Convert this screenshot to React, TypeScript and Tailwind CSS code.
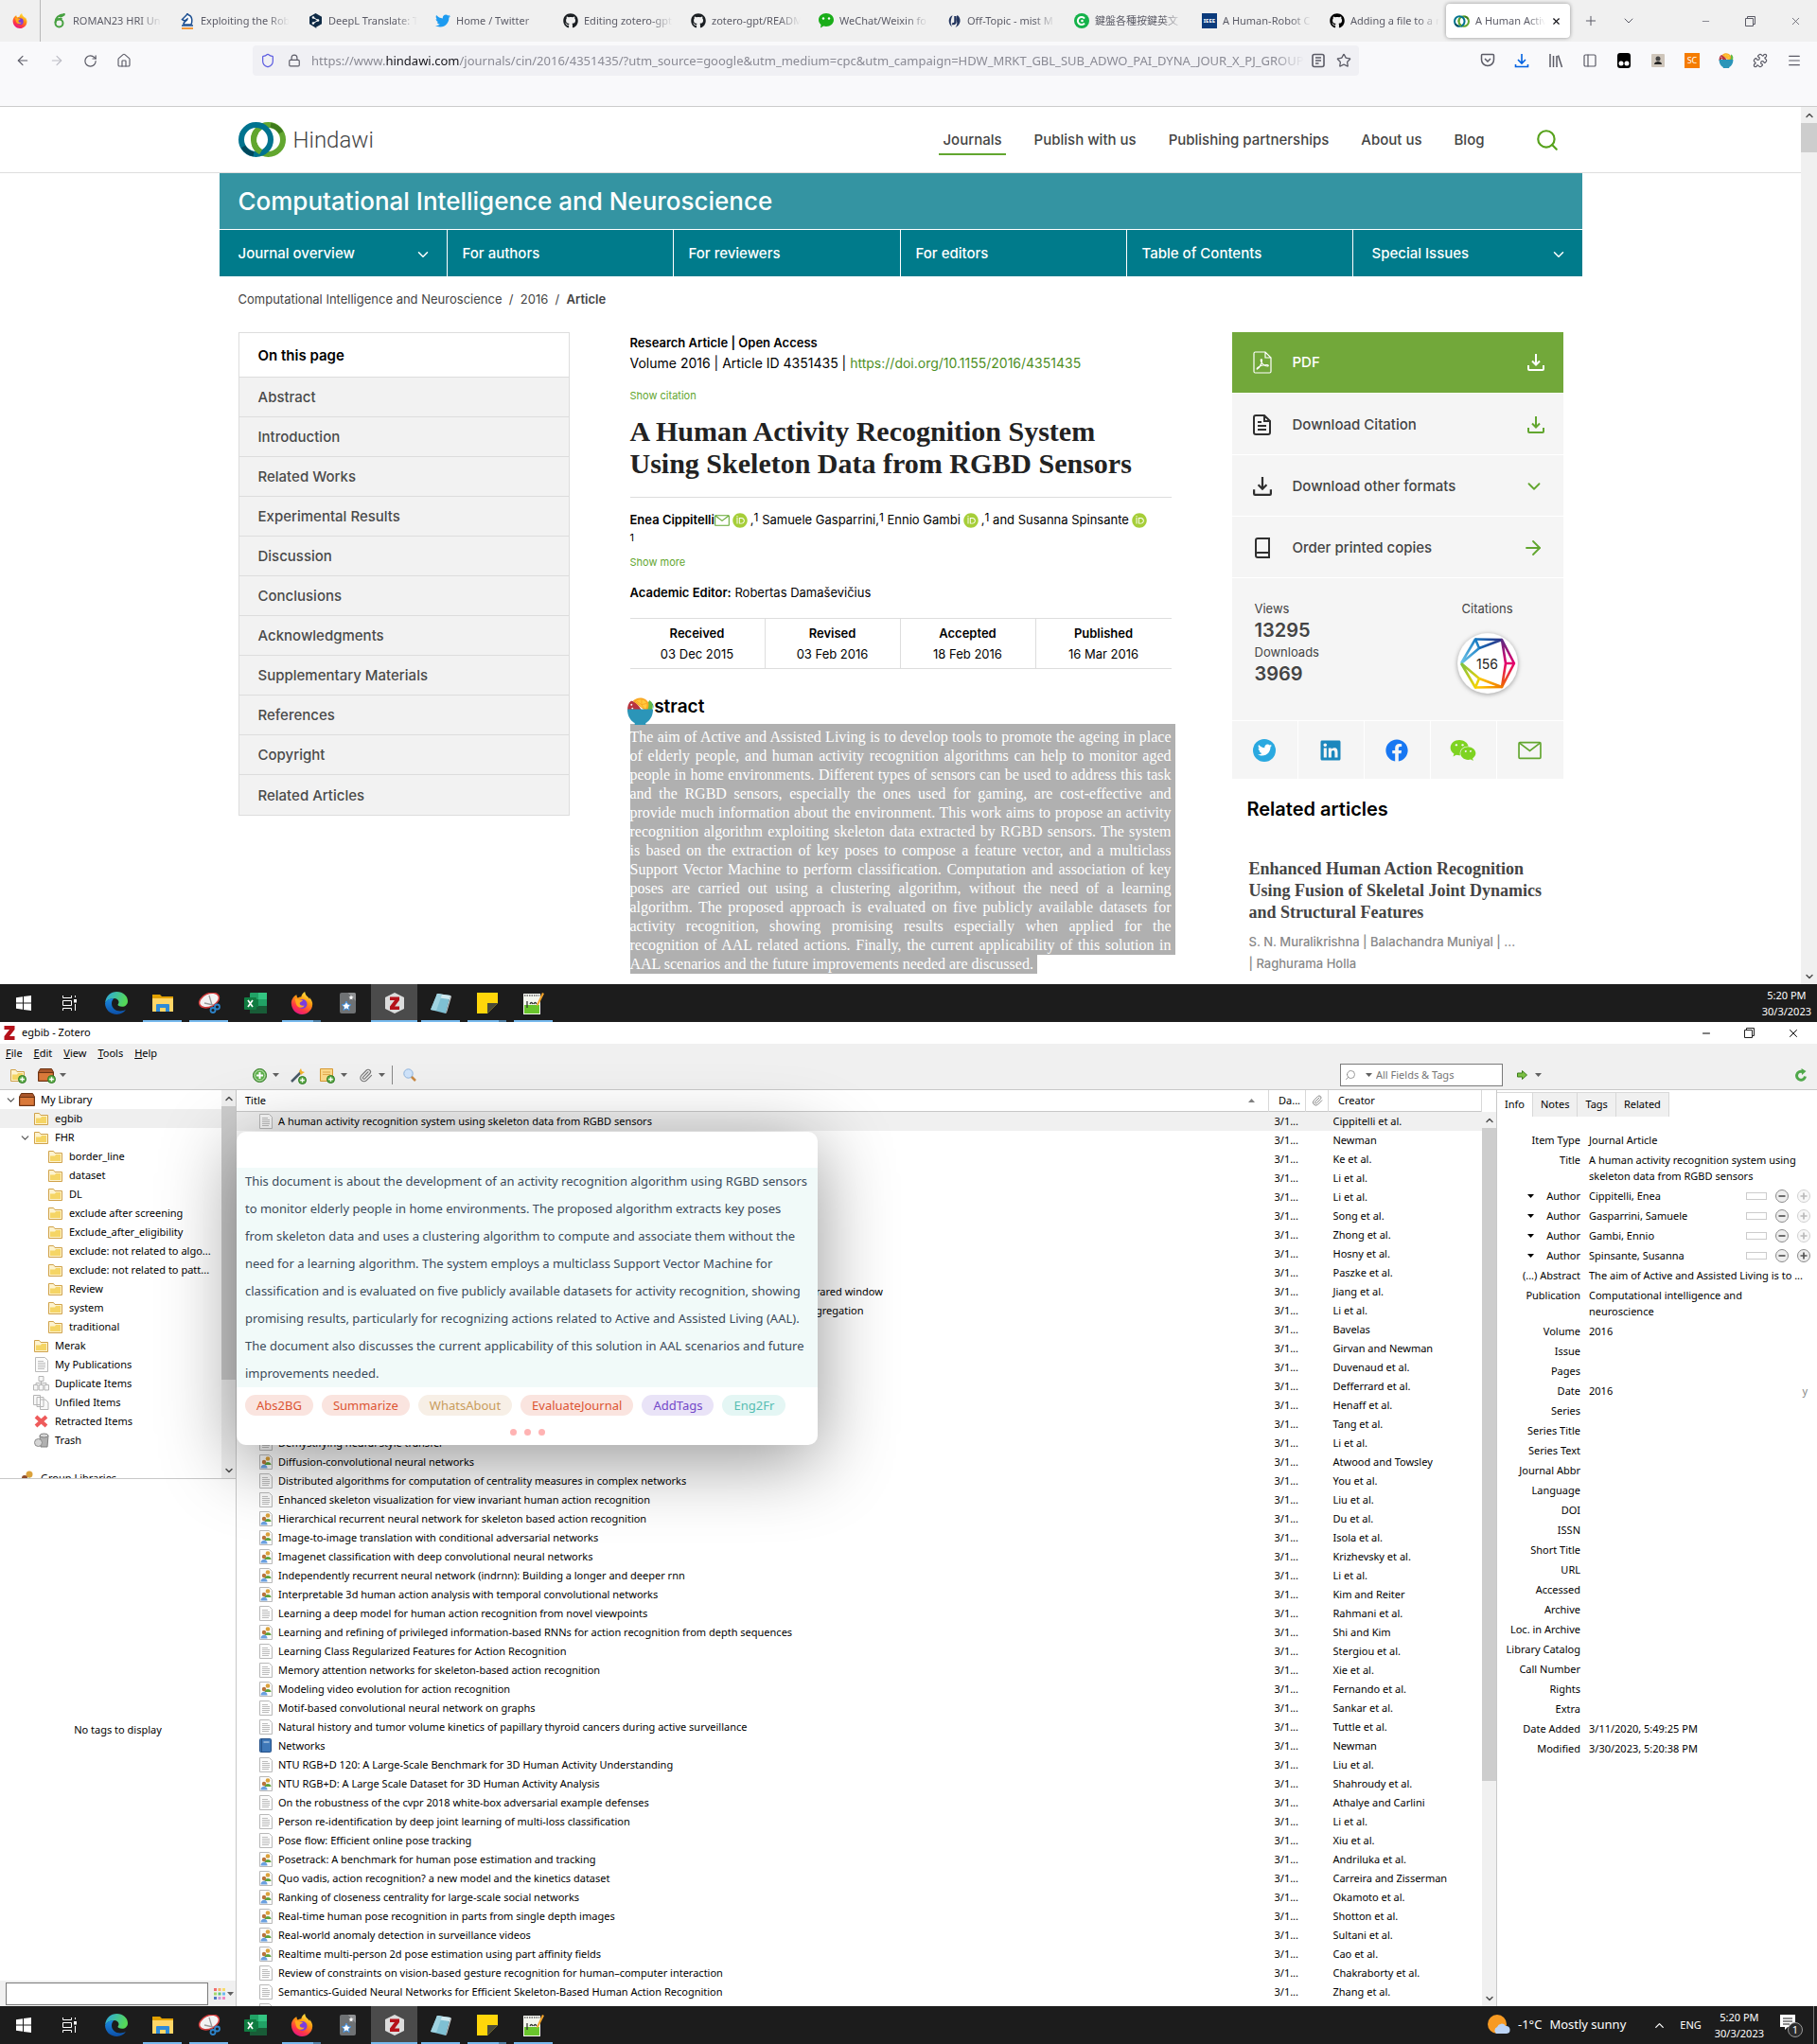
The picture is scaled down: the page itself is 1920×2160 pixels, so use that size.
import type { ReactNode } from "react";
import { FaGithub, FaTwitter, FaWeixin, FaFacebook, FaLinkedin, FaOrcid } from "react-icons/fa";
import {
  ArrowLeft,
  ArrowRight,
  RotateCw,
  House,
  Shield,
  Lock,
  Star,
  ChevronDown,
  ChevronUp,
  Plus,
  X,
  Minus,
  Menu,
  Puzzle,
  PanelLeft,
  Search,
  Paperclip,
} from "lucide-react";

/* ---------- drawings ---------- */

const Firefox = ({ s = 16 }: { s?: number }) => (
  <svg width={s} height={s} viewBox="0 0 24 24" aria-hidden="true">
    <defs>
      <linearGradient id="ff" x1="0.8" y1="0" x2="0.3" y2="1">
        <stop offset="0" stopColor="#fff44f" />
        <stop offset="0.4" stopColor="#ff980e" />
        <stop offset="0.75" stopColor="#ff3647" />
        <stop offset="1" stopColor="#e31587" />
      </linearGradient>
    </defs>
    <path d="M22.5 10c-.6-1.6-1.6-3-2.6-3.9.3.8.5 1.4.5 2C19.3 5.600 15.500 4.500 15.200 0c-3 1.700-3.700 4.500-3.900 5.500-1.600 0-2.800.6-3.500 1.100-.9-.7-1.300-2-1.400-3.400C4.300 4.300 3.200 5.500 2.600 6.600 1 9 .8 11 .9 12.800 1.200 19 6 24 12 24s11.200-4.700 11.200-11c0-1.100-.2-2-.7-3z" fill="url(#ff)" />
    <circle cx="12.500" cy="13" r="5" fill="#7a3ce0" />
    <path d="M4.500 7.500c2-.7 4 .1 4.900 1 1.500-.2 2.800.2 3.600.8-.5 1.400-3 1.300-3.300 2.700-.4 2.300 3 3.500 5 2.200-1 3.400-6.800 3.600-8.600-.8-.8-2-.8-4-1.600-5.900z" fill="#ffa91b" />
  </svg>
);

const HindawiRings = ({ w = 50, h = 37 }: { w?: number; h?: number }) => (
  <svg width={w} height={h} viewBox="0 0 50 37" aria-hidden="true">
    <circle cx="31.500" cy="18.500" r="15.500" fill="none" stroke="#62a62f" strokeWidth="6" />
    <circle cx="18.500" cy="18.500" r="15.500" fill="none" stroke="#00738f" strokeWidth="6" />
    <path d="M5 26a15.500 15.500 0 0 0 11 7.800" fill="none" stroke="#00485c" strokeWidth="5" />
    <path d="M16.600 22.500a15.500 15.500 0 0 0 7 9.300" fill="none" stroke="#62a62f" strokeWidth="6" />
    <path d="M16.100 20a15.500 15.500 0 0 1 2.500-10" fill="none" stroke="#62a62f" strokeWidth="6" />
    <path d="M34 3.200a15.500 15.500 0 0 1 11 8" fill="none" stroke="#3f7a1c" strokeWidth="5" />
  </svg>
);

const Salad = ({ s = 16 }: { s?: number }) => (
  <svg width={s} height={s} viewBox="0 0 28 30" aria-hidden="true">
    <path d="M24 3c4 2 5 8 2 12h-8z" fill="#63b946" />
    <path d="M4 4c3-1 9 5 12 11H0C0 10 1 6 4 4z" fill="#b8343f" />
    <circle cx="4.500" cy="8" r="1" fill="#fff" />
    <circle cx="5.500" cy="12" r="1" fill="#fff" />
    <path d="M6 4C10-1 20-1 23 6c1 4-1 8-3 9z" fill="#f9a825" />
    <path d="M9 4.500c3-3 10-3 12 2 1 3-1 6-2 7z" fill="#ffc93c" />
    <path d="M15.500 8 10 4M15.500 8V2M15.500 8l6-1.500M15.500 8l4 6" stroke="#f9a825" strokeWidth="1" />
    <path d="M0 13h28c0 8-4 13-8 15v2H8v-2C4 26 0 21 0 13z" fill="#2b95b8" />
  </svg>
);

const DeepL = () => (
  <svg width="15" height="16" viewBox="0 0 15 16" aria-hidden="true">
    <path d="M7.500 0 14 3.700v7.600L8 14.800 8.500 16 1 11.300V3.700z" fill="#0f2b46" />
    <path d="M5 4.500 10 7.500 5 10.500" stroke="#fff" fill="none" />
    <circle cx="5" cy="4.500" r="1.300" fill="#fff" />
    <circle cx="10" cy="7.500" r="1.300" fill="#fff" />
    <circle cx="5" cy="10.500" r="1.300" fill="#fff" />
  </svg>
);

const Overleaf = () => (
  <svg width="14" height="16" viewBox="0 0 14 16" aria-hidden="true">
    <circle cx="6.500" cy="10.500" r="4" fill="none" stroke="#47a141" strokeWidth="2" />
    <path d="M2.500 10C2.500 5 6 1.500 12.500 1 10 2 11 3 7.500 3.500M5 6.500c2-1 3.500-1 4.500-.5" fill="none" stroke="#47a141" strokeWidth="2" />
  </svg>
);

const Knight = () => (
  <svg width="14" height="17" viewBox="0 0 14 17" aria-hidden="true">
    <path d="M3 12c0-4 4-3.500 4-6L4 8 1.500 6.500 6 2l1-1.500L8.500 2C12 3 12.500 8 11 12z" fill="#fff" stroke="#1d4f91" strokeWidth="1.500" />
    <path d="M1 13h12" stroke="#1d4f91" strokeWidth="1.500" />
    <path d="M1 16h12" stroke="#f57c00" strokeWidth="1.500" />
  </svg>
);

const WeChatFav = () => (
  <svg width="16" height="16" viewBox="0 0 16 16" aria-hidden="true">
    <path d="M8 0c4.500 0 8 3 8 7s-3.500 7-8 7c-1 0-2-.1-2.800-.4L2 15.500 2.500 12C1 10.700 0 9 0 7c0-4 3.500-7 8-7z" fill="#1aad19" />
    <circle cx="5" cy="5.500" r="1.200" fill="#fff" />
    <circle cx="11" cy="5.500" r="1.200" fill="#fff" />
  </svg>
);

const Mist = () => (
  <svg width="15" height="15" viewBox="0 0 16 16" aria-hidden="true">
    <path d="M6 1.200C1 3 0 10 5.500 14.500 3 10 4 5 6 1.200zM11 1c5 2.500 5 11-2 14 3-4 2-6 1-9z" fill="#24365f" />
    <path d="M9 2v7.500a2.500 2.500 0 0 1-3.500 1" fill="none" stroke="#24365f" strokeWidth="2.500" />
  </svg>
);

const GreenC = () => (
  <svg width="16" height="16" viewBox="0 0 16 16" aria-hidden="true">
    <circle cx="8" cy="8" r="8" fill="#15b24a" />
    <path d="M11 5.500A4 4 0 1 0 11 10.500" fill="none" stroke="#fff" strokeWidth="2" />
    <circle cx="8.500" cy="8" r="1.300" fill="#fff" />
  </svg>
);

const Ieee = () => (
  <span className="flex h-4 w-4 items-center justify-center bg-[#0b3b7c] text-[6px] font-bold text-white">IEEE</span>
);

const Tray = ({ s = 18, c = "currentColor", sw = 2 }: { s?: number; c?: string; sw?: number }) => (
  <svg width={s} height={s} viewBox="0 0 18 18" fill="none" stroke={c} strokeWidth={sw} aria-hidden="true">
    <path d="M9 0v11M5 7.500 9 11.500l4-4M1 12v4q0 1 1 1h14q1 0 1-1v-4" />
  </svg>
);

const PdfIcon = () => (
  <svg width="20" height="24" viewBox="0 0 20 24" fill="none" stroke="#fff" strokeWidth="1.200" aria-hidden="true">
    <path d="M2.500 1H13l6 6v14.500q0 1.500-1.500 1.500h-15Q1 23 1 21.500v-19Q1 1 2.500 1zM13 1v6h6" />
    <path d="M4.500 19c2-1 5-5.500 5-9.500 0-1-1.300-1-1.300 0 0 3 3.800 6.500 7 6.500 1.500 0 1.500-1.500-.5-1.500-3 0-7.500 1.300-9.700 3-1 .8-1 1.800-.5 1.500z" />
  </svg>
);

const DocLines = () => (
  <svg width="19" height="22" viewBox="0 0 19 22" fill="none" stroke="#2f2f2f" strokeWidth="2" aria-hidden="true">
    <path d="M3 1h9l6 6v12q0 2-2 2H3q-2 0-2-2V3q0-2 2-2zM12 1v6h6M5 8h4M5 12h9M5 16h9" />
  </svg>
);

const BookIcon = () => (
  <svg width="20" height="22" viewBox="-2 0 20 22" fill="none" stroke="#2f2f2f" strokeWidth="2" aria-hidden="true">
    <path d="M3 1h12v20H3q-2 0-2-2V3q0-2 2-2zM1 17q0-1 2-1h12" />
  </svg>
);

const ReaderIcon = () => (
  <svg width="14" height="16" viewBox="0 0 14 16" fill="none" stroke="currentColor" strokeWidth="1.600" aria-hidden="true">
    <rect x="1" y="1.500" width="12" height="13" rx="2" />
    <path d="M4 5h6M4 8h6M4 11h3.500" />
  </svg>
);

const Badge = () => (
  <svg width="64" height="64" viewBox="-32 -32 64 64" fill="none" strokeWidth="2.600" strokeLinejoin="round" aria-hidden="true">
    <defs>
      <linearGradient id="b1" x1="0" y1="1" x2="1" y2="0"><stop offset="0" stopColor="#6ec6ea" /><stop offset="1" stopColor="#1376bf" /></linearGradient>
      <linearGradient id="b2" x1="0" y1="0" x2="1" y2="0"><stop offset="0" stopColor="#1376bf" /><stop offset="1" stopColor="#2b2f83" /></linearGradient>
      <linearGradient id="b3" x1="0" y1="0" x2="0" y2="1"><stop offset="0" stopColor="#5b2d84" /><stop offset="0.500" stopColor="#e5006d" /><stop offset="1" stopColor="#ef6a00" /></linearGradient>
      <linearGradient id="b4" x1="0" y1="0" x2="1" y2="0"><stop offset="0" stopColor="#ffd400" /><stop offset="1" stopColor="#f07800" /></linearGradient>
      <linearGradient id="b5" x1="0" y1="0" x2="1" y2="1"><stop offset="0" stopColor="#7ac143" /><stop offset="1" stopColor="#ffd400" /></linearGradient>
    </defs>
    <circle r="31.500" fill="#fff" />
    <path d="M-28 0-13-25.500-9-16-28 0" stroke="url(#b1)" />
    <path d="M-13-25.500 15-25M-9-16 15-25" stroke="url(#b2)" />
    <path d="M15-25 28 0 15 25 19 0zM19 0h9" stroke="url(#b3)" />
    <path d="M-13 25.500 15 25-9 16" stroke="url(#b4)" />
    <path d="M-28 0-13 25.500-9 16-28 0" stroke="url(#b5)" />
  </svg>
);

const WinLogo = () => (
  <svg width="16" height="16" viewBox="0 0 16 16" fill="#fff" aria-hidden="true">
    <path d="M0 2.200 7 1.200v6.300H0zM8 1.100 16 0v7.500H8zM0 8.500h7v6.300l-7-1zM8 8.500h8V16l-8-1.100z" />
  </svg>
);
const TaskView = () => (
  <svg width="17" height="16" viewBox="0 0 17 16" fill="none" stroke="#fff" aria-hidden="true">
    <path d="M1.500 0v2.500h9V0M1.500 5.500h9v5h-9zM1.500 16v-2.500h9V16M14.500 0v2M14.500 9v7" />
    <rect x="13.500" y="4.500" width="2" height="2.500" fill="#fff" />
  </svg>
);
const Edge = () => (
  <svg width="24" height="24" viewBox="0 0 24 24" aria-hidden="true">
    <defs>
      <linearGradient id="e1" x1="0" y1="0" x2="1" y2="0.300"><stop offset="0" stopColor="#2aa5e8" /><stop offset="1" stopColor="#55d957" /></linearGradient>
      <linearGradient id="e2" x1="0" y1="0" x2="0" y2="1"><stop offset="0" stopColor="#1b8be0" /><stop offset="1" stopColor="#0c4fa8" /></linearGradient>
    </defs>
    <path d="M0 12C1 4 6 0 12.500 0 19 0 24 4.500 24 10c0 3.500-2.700 5.800-6 5.800-3 0-4.500-1.200-4.500-2 0-.6 1-1 1-2.800 0-2-2-4-5-4C5 7 1.500 9.500 0 12z" fill="url(#e1)" />
    <path d="M0 12c1.500-3.200 5-5 9.500-5C8 8 7 10 7 12.500 7 17 11 20.500 16 20.500c2.500 0 4.500-.7 6-1.700C20 22 16.500 24 12.500 24 5.500 24 0 19 0 12z" fill="url(#e2)" />
  </svg>
);
const Explorer = () => (
  <svg width="22" height="18" viewBox="0 0 22 18" aria-hidden="true">
    <path d="M0 0h8l2 2h12v16H0z" fill="#e2a100" />
    <path d="M0 4h22v14H0z" fill="#ffd667" />
    <path d="M4 18v-7q0-1 1-1h12q1 0 1 1v7h-4v-4H8v4z" fill="#2f8bd8" />
  </svg>
);
const Snip = () => (
  <svg width="24" height="22" viewBox="0 0 24 22" aria-hidden="true">
    <ellipse cx="12" cy="8" rx="11" ry="7" transform="rotate(-25 12 8)" fill="#f3f3f3" stroke="#d23b3b" strokeWidth="1.500" />
    <path d="M12 3 15 13M7 11l9 2" stroke="#999" strokeWidth="1.300" />
    <circle cx="16" cy="18.500" r="2.500" fill="none" stroke="#2d83c9" strokeWidth="1.800" />
    <circle cx="20.500" cy="15" r="2.500" fill="none" stroke="#2d83c9" strokeWidth="1.800" />
  </svg>
);
const Excel = () => (
  <svg width="24" height="22" viewBox="0 0 24 22" aria-hidden="true">
    <rect x="6" width="18" height="22" rx="1" fill="#21a366" />
    <path d="M15 0h9v7h-9z" fill="#33c481" />
    <path d="M6 14h18v8H6z" fill="#185c37" />
    <path d="M6 7h9v8H6z" fill="#107c41" />
    <rect y="5" width="13" height="13" rx="1" fill="#107c41" />
    <path d="M4 8l5 7M9 8l-5 7" stroke="#fff" strokeWidth="1.700" />
  </svg>
);
const GreyStar = () => (
  <svg width="17" height="22" viewBox="0 0 17 22" aria-hidden="true">
    <rect width="17" height="22" rx="2" fill="#6f7274" />
    <path d="M8.500 0H15q2 0 2 2v7z" fill="#8f9193" />
    <path d="M7 9l1.500 3.200 3.500.4-2.600 2.400.7 3.500L7 16.800 3.900 18.500l.7-3.500L2 12.600l3.500-.4z" fill="#fff" stroke="#3f8fe0" />
    <path d="M12 2.500l.8 1.700 1.700.3-1.300 1.200.3 1.800-1.500-.9-1.500.9.300-1.800L9.500 4.500l1.700-.3z" fill="#fff" />
  </svg>
);
const ZoteroBadge = () => (
  <svg width="20" height="22" viewBox="0 0 20 22" aria-hidden="true">
    <path d="M10 0 20 5v12l-10 5L0 17V5z" fill="#dcdcdc" />
    <path d="M5 4.500h10v3.500l-5 6.500h5V18H5v-3.500L10 8H5z" fill="#b5121b" />
  </svg>
);
const ZoteroZ = () => (
  <svg width="12" height="15" viewBox="0 0 12 15" aria-hidden="true">
    <path d="M.5 0h11v4L6 11h5.500v4H.5v-4L6 4H.5z" fill="#b5121b" />
  </svg>
);
const Notepad = () => (
  <svg width="23" height="22" viewBox="0 0 23 22" aria-hidden="true">
    <path d="M8 1 22 3 17 22 1 18z" fill="#7fc0d3" />
    <path d="M8 1 22 3 21 7 7 5z" fill="#cfe9ef" />
    <path d="M22 3l1 1-5 17-1 1z" fill="#d5d5d5" />
    <path d="M8 1 1 18l6 1 6-17z" fill="#9fd3e1" />
  </svg>
);
const Sticky = () => (
  <svg width="22" height="22" viewBox="0 0 22 22" aria-hidden="true">
    <path d="M0 0h22v11L11 22H0z" fill="#ffd60a" />
    <path d="M11 22V11h11z" fill="#4a4a3a" />
  </svg>
);
const Npp = () => (
  <svg width="23" height="23" viewBox="0 0 23 23" aria-hidden="true">
    <rect x="1" y="1" width="18" height="22" fill="#f4f6ee" />
    <path d="M2 13h16v9H2z" fill="#69c52c" />
    <path d="M2 3h16" stroke="#888" strokeDasharray="1.500 1" strokeWidth="2" />
    <path d="M5 16V9M8 12c1-2 2-2 3 0M12 12c1-2 2-2 3 0" stroke="#333" fill="none" strokeWidth="1.300" />
    <path d="M21 0 23 1 17 13l-2 1 .3-2z" fill="#f1a32b" />
  </svg>
);

const Folder = () => (
  <svg width="15" height="13" viewBox="0 0 15 13" aria-hidden="true">
    <path d="M.5 12.500V.5h5l1.500 2h7.500v10z" fill="#fdf3cf" stroke="#d0a24a" />
    <path d="M2 11V5.500h5L8 4h5v7z" fill="#f5d565" />
  </svg>
);
const Crate = () => (
  <svg width="17" height="14" viewBox="0 0 17 14" aria-hidden="true">
    <path d="M2.500.5h12L16.500 4v9.500H.5V4z" fill="#a9562a" stroke="#6c3414" />
    <path d="M1.500 5h14v7.500h-14z" fill="#d9793a" />
    <path d="M.5 4.500h16" stroke="#6c3414" />
  </svg>
);
const PlusDot = () => (
  <svg width="9" height="9" viewBox="0 0 9 9" className="absolute -right-0.5 -bottom-0.5" aria-hidden="true">
    <circle cx="4.500" cy="4.500" r="4" fill="#5fae4a" stroke="#2f7a24" />
    <path d="M4.500 2.200v4.600M2.200 4.500h4.600" stroke="#fff" strokeWidth="1.300" />
  </svg>
);
const Page = () => (
  <svg width="14" height="16" viewBox="0 0 14 16" aria-hidden="true">
    <path d="M.5.500h10l3 3v12H.5z" fill="#fbfbfb" stroke="#b9b9b9" />
    <path d="M3 4.500h6M3 6.500h8M3 8.500h8M3 10.500h8M3 12.500h7" stroke="#bdbdbd" />
  </svg>
);
const People = () => (
  <svg width="14" height="16" viewBox="0 0 14 16" aria-hidden="true">
    <path d="M.5.500h10l3 3v12H.5z" fill="#fbfbfb" stroke="#b9b9b9" />
    <circle cx="9" cy="4.500" r="2.300" fill="#dba23c" />
    <path d="M5.500 11c0-4 7-4 7 0z" fill="#5da23b" />
    <circle cx="5" cy="8" r="2.200" fill="#b9733b" />
    <path d="M1.500 14.500c0-5 7-5 7 0z" fill="#6aa0e0" />
  </svg>
);
const BlueBook = () => (
  <svg width="13" height="15" viewBox="0 0 13 15" aria-hidden="true">
    <rect x=".5" y=".5" width="12" height="14" rx="1" fill="#3f78b8" stroke="#234f86" />
    <path d="M2.500 1v13" stroke="#234f86" />
    <path d="M4.500 4h6" stroke="#d6e5f5" />
  </svg>
);
const Dup = () => (
  <svg width="17" height="16" viewBox="0 0 17 16" fill="#f6f6f6" stroke="#b5b5b5" aria-hidden="true">
    <path d="M6 .500h5v5H6zM8.500 5.500V9M3 9.500V7.500h11v2M.5 9.500h4.500v5.500H.5zM6.200 9.500h4.600v5.500H6.200zM12 9.500h4.500v5.500H12z" />
  </svg>
);
const Unfiled = () => (
  <svg width="17" height="16" viewBox="0 0 17 16" fill="#f9f9f9" stroke="#b5b5b5" aria-hidden="true">
    <path d="M.5.500h7v10h-7zM4 2.500h7v10H4zM7.500 5H13l3 3v7.500H7.500z" />
  </svg>
);
const RedX = () => (
  <svg width="15" height="14" viewBox="0 0 15 14" stroke="#ee5b5b" strokeWidth="4" aria-hidden="true">
    <path d="M2 2 13 12M13 2 2 12" />
  </svg>
);
const Trash = () => (
  <svg width="16" height="16" viewBox="0 0 16 16" aria-hidden="true">
    <path d="M6 3h9l-1 12H7z" fill="#b0b0b0" stroke="#7e7e7e" />
    <ellipse cx="10.500" cy="3" rx="4.500" ry="2" fill="#d8d8d8" stroke="#7e7e7e" />
    <circle cx="4.500" cy="10.500" r="4" fill="#d5d5d5" stroke="#8a8a8a" />
  </svg>
);
const Group = () => (
  <svg width="16" height="16" viewBox="0 0 16 16" aria-hidden="true">
    <circle cx="10" cy="4" r="3.500" fill="#dba23c" />
    <path d="M5 13c0-7 10-7 10 0z" fill="#5da23b" />
    <circle cx="5" cy="8" r="3" fill="#8b4a2a" />
    <path d="M0 16c0-7 9-7 9 0z" fill="#6aa0e0" />
  </svg>
);
const Caret = ({ cls = "text-[#606060]" }: { cls?: string }) => (
  <svg width="7" height="4" viewBox="0 0 7 4" className={cls} fill="currentColor" aria-hidden="true">
    <path d="M0 0h7L3.500 4z" />
  </svg>
);
const Restore = ({ c = "#222" }: { c?: string }) => (
  <svg width="11" height="11" viewBox="0 0 11 11" fill="none" stroke={c} aria-hidden="true">
    <path d="M.5 2.500h8v8h-8zM2.500 2.500v-2h8v8h-2" />
  </svg>
);
const Envelope = ({ w, h }: { w: number; h: number }) => (
  <svg width={w} height={h} viewBox="0 0 24 18" fill="none" stroke="#62a62f" strokeWidth="1.600" className="inline-block" aria-hidden="true">
    <rect x="1" y="1" width="22" height="16" rx="1" />
    <path d="m1.500 1.500 10.500 8 10.500-8" />
  </svg>
);

/* ---------- browser ---------- */

const tabs: { icon: ReactNode; label: string }[] = [
  { icon: <Overleaf />, label: "ROMAN23 HRI Un" },
  { icon: <Knight />, label: "Exploiting the Rob" },
  { icon: <DeepL />, label: "DeepL Translate: T" },
  { icon: <FaTwitter size={16} color="#1d9bf0" />, label: "Home / Twitter" },
  { icon: <FaGithub size={16} color="#1b1f23" />, label: "Editing zotero-gpt" },
  { icon: <FaGithub size={16} color="#1b1f23" />, label: "zotero-gpt/READM" },
  { icon: <WeChatFav />, label: "WeChat/Weixin fo" },
  { icon: <Mist />, label: "Off-Topic - mist M" },
  { icon: <GreenC />, label: "鍵盤各種按鍵英文" },
  { icon: <Ieee />, label: "A Human-Robot C" },
  { icon: <FaGithub size={16} color="#000" />, label: "Adding a file to a r" },
];

function BrowserTabs() {
  return (
    <div className="flex h-11 shrink-0 items-center bg-[#f0f0f0] text-[11px] text-[#5b5b66]">
      <div className="flex h-full w-[43px] shrink-0 items-center justify-center border-r border-[#b8b8b8]">
        <Firefox />
      </div>
      {tabs.map((t, i) => (
        <button key={i} className="flex h-9 w-[135px] shrink-0 items-center gap-1.5 pl-3">
          <span className="flex w-4 shrink-0 justify-center">{t.icon}</span>
          <span className="w-[94px] overflow-hidden [mask-image:linear-gradient(to_right,black_75%,transparent)] text-left whitespace-nowrap">{t.label}</span>
        </button>
      ))}
      <div className="flex h-9 w-[131px] shrink-0 items-center gap-1.5 rounded bg-white pl-2 shadow-[0_0_4px_rgba(0,0,0,0.4)]">
        <HindawiRings w={17} h={15} />
        <span className="w-[74px] overflow-hidden [mask-image:linear-gradient(to_right,black_75%,transparent)] whitespace-nowrap">A Human Activ</span>
        <button aria-label="Close tab"><X size={11} color="#15141a" strokeWidth={2.500} /></button>
      </div>
      <button aria-label="New tab" className="ml-3.5"><Plus size={16} strokeWidth={1.500} /></button>
      <button aria-label="List all tabs" className="ml-6"><ChevronDown size={16} strokeWidth={1.500} /></button>
      <div className="ml-auto flex items-center gap-9 pr-4">
        <button aria-label="Minimize"><Minus size={11} strokeWidth={1.500} /></button>
        <button aria-label="Restore"><Restore c="#5b5b66" /></button>
        <button aria-label="Close"><X size={13} strokeWidth={1.500} /></button>
      </div>
    </div>
  );
}

function UrlRow() {
  return (
    <div className="flex h-[69px] shrink-0 items-start border-b border-[#ccc] bg-[#f9f9fb] pt-1 text-[#5b5b66]">
      <div className="flex h-8 w-[267px] shrink-0 items-center gap-5 pl-4">
        <button aria-label="Back"><ArrowLeft size={16} strokeWidth={1.700} /></button>
        <button aria-label="Forward"><ArrowRight size={16} strokeWidth={1.700} color="#bcbcc4" /></button>
        <button aria-label="Reload"><RotateCw size={15} strokeWidth={1.900} /></button>
        <button aria-label="Home"><House size={16} strokeWidth={1.700} /></button>
      </div>
      <div className="flex h-8 min-w-0 flex-1 items-center rounded bg-[#f0f0f4] pr-2 pl-2">
        <Shield size={16} color="#5b5be0" strokeWidth={1.800} className="shrink-0" />
        <Lock size={14} strokeWidth={2} className="mr-[11px] ml-[13px] shrink-0" />
        <div className="min-w-0 flex-1 overflow-hidden [mask-image:linear-gradient(to_right,black_97%,transparent)] pt-0.5 text-[13px] whitespace-nowrap text-[#8a8a94]">
          https://www.<span className="text-[#15141a]">hindawi.com</span>/journals/cin/2016/4351435/?utm_source=google&amp;utm_medium=cpc&amp;utm_campaign=HDW_MRKT_GBL_SUB_ADWO_PAI_DYNA_JOUR_X_PJ_GROUP
        </div>
        <button aria-label="Reader view" className="ml-2"><ReaderIcon /></button>
        <button aria-label="Bookmark" className="ml-3"><Star size={16} strokeWidth={1.900} /></button>
      </div>
      <div className="flex h-8 w-[484px] shrink-0 items-center justify-end gap-5 pr-4">
        <svg width="16" height="16" viewBox="0 0 16 16" fill="none" stroke="currentColor" strokeWidth="1.500" aria-hidden="true">
          <path d="M2.500 1.500h11q1 0 1 1V7a6.500 6.500 0 0 1-13 0V2.500q0-1 1-1zM5 6l3 3 3-3" />
        </svg>
        <svg width="16" height="16" viewBox="0 0 16 16" fill="none" stroke="#0061e0" strokeWidth="1.600" aria-hidden="true">
          <path d="M8 1v9.500M4 7l4 4 4-4M1.500 12v2.500h13V12" />
        </svg>
        <svg width="16" height="16" viewBox="0 0 16 16" fill="none" stroke="currentColor" strokeWidth="1.500" aria-hidden="true">
          <path d="M2 1v14M5.500 3v12M9 3v12M10.500 2.500 14.500 15" />
        </svg>
        <PanelLeft size={16} strokeWidth={1.800} />
        <svg width="16" height="16" viewBox="0 0 16 16" aria-hidden="true">
          <rect x="1" width="14" height="16" rx="3" fill="#000" />
          <circle cx="5" cy="11" r="2.500" fill="#fff" /><circle cx="11" cy="11" r="2.500" fill="#fff" />
        </svg>
        <svg width="16" height="16" viewBox="0 0 16 16" aria-hidden="true">
          <rect x="1" y="1" width="14" height="14" rx="1" fill="#cfc6bb" />
          <circle cx="8" cy="6" r="2.500" fill="#444" /><path d="M4 12c0-4 8-4 8 0z" fill="#222" />
        </svg>
        <span className="flex h-4 w-4 items-center justify-center bg-[#f57c00] text-[9px] text-white">SC</span>
        <Salad />
        <Puzzle size={16} strokeWidth={1.800} />
        <button aria-label="Menu"><Menu size={16} strokeWidth={1.800} /></button>
      </div>
    </div>
  );
}

/* ---------- journal article ---------- */

const sections = [
  "Abstract", "Introduction", "Related Works", "Experimental Results", "Discussion", "Conclusions",
  "Acknowledgments", "Supplementary Materials", "References", "Copyright", "Related Articles",
];

const abstractLines = [
  "The aim of Active and Assisted Living is to develop tools to promote the ageing in place",
  "of elderly people, and human activity recognition algorithms can help to monitor aged",
  "people in home environments. Different types of sensors can be used to address this task",
  "and the RGBD sensors, especially the ones used for gaming, are cost-effective and",
  "provide much information about the environment. This work aims to propose an activity",
  "recognition algorithm exploiting skeleton data extracted by RGBD sensors. The system",
  "is based on the extraction of key poses to compose a feature vector, and a multiclass",
  "Support Vector Machine to perform classification. Computation and association of key",
  "poses are carried out using a clustering algorithm, without the need of a learning",
  "algorithm. The proposed approach is evaluated on five publicly available datasets for",
  "activity recognition, showing promising results especially when applied for the",
  "recognition of AAL related actions. Finally, the current applicability of this solution in",
];

const dates = [
  ["Received", "03 Dec 2015"], ["Revised", "03 Feb 2016"], ["Accepted", "18 Feb 2016"], ["Published", "16 Mar 2016"],
];

const Orcid = () => <FaOrcid size={16} color="#a6ce39" className="mx-[3px] inline-block" />;
const Affil = () => <sup className="top-[-3px] text-[12px]">1</sup>;

function Article() {
  return (
    <article className="min-w-0 text-[13px] text-black">
      <p className="leading-[22px] font-semibold">Research Article | Open Access</p>
      <p className="text-[14px] leading-[22px]">
        Volume 2016 | Article ID 4351435 | <a href="#doi" className="text-[#4e8f1f]">https://doi.org/10.1155/2016/4351435</a>
      </p>
      <button className="mt-3.5 block text-[11px] leading-[18px] text-[#62a62f]">Show citation</button>
      <h1 className="mt-3 font-['Liberation_Serif',serif] text-[30px] leading-[34px] font-bold text-[#222]">
        A Human Activity Recognition System
        <br />
        Using Skeleton Data from RGBD Sensors
      </h1>
      <div className="mt-[18px] border-t border-[#ddd] pt-3.5 leading-[18px]">
        <b className="font-semibold">Enea Cippitelli</b>
        <Envelope w={16} h={12} /><Orcid />,<Affil /> Samuele Gasparrini,<Affil /> Ennio Gambi<Orcid />,<Affil /> and Susanna Spinsante
        <Orcid />
        <br />
        <span className="text-[11px]">1</span>
      </div>
      <button className="mt-2 block text-[11px] leading-[18px] text-[#62a62f]">Show more</button>
      <p className="mt-3 leading-[22px]">
        <b className="font-semibold">Academic Editor:</b> Robertas Damaševičius
      </p>
      <dl className="mt-4 grid grid-cols-4 divide-x divide-[#ddd] border-y border-[#ddd] text-center leading-[22px]">
        {dates.map(([k, v]) => (
          <div key={k} className="py-1">
            <dt className="font-semibold">{k}</dt>
            <dd>{v}</dd>
          </div>
        ))}
      </dl>
      <div className="relative mt-[26px]">
        <h2 className="text-[19px] leading-7 font-semibold">Abstract</h2>
        <span className="absolute top-1 -left-1 rounded-full bg-white"><Salad s={29} /></span>
      </div>
      <div className="mt-1 font-['Liberation_Serif',serif] text-[16px] leading-5 text-white">
        <div className="-mr-1 bg-[#b0b0b0] pt-1 pr-1">
          {abstractLines.map((l) => (
            <p key={l} className="[text-align-last:justify]">{l}</p>
          ))}
        </div>
        <p><span className="inline-block bg-[#b0b0b0] pr-1">AAL scenarios and the future improvements needed are discussed.</span></p>
      </div>
    </article>
  );
}

const actions: { icon: ReactNode; label: string; end: ReactNode }[] = [
  { icon: <DocLines />, label: "Download Citation", end: <Tray c="#62a62f" /> },
  { icon: <Tray s={20} c="#2f2f2f" />, label: "Download other formats", end: <ChevronDown size={22} color="#62a62f" /> },
  { icon: <BookIcon />, label: "Order printed copies", end: <ArrowRight size={24} color="#62a62f" strokeWidth={1.800} /> },
];

const shares: { label: string; icon: ReactNode }[] = [
  { label: "Twitter", icon: <span className="flex h-6 w-6 items-center justify-center rounded-full bg-[#2aa9e0]"><FaTwitter size={15} color="#fff" /></span> },
  { label: "LinkedIn", icon: <FaLinkedin size={24} color="#1c87bd" /> },
  { label: "Facebook", icon: <FaFacebook size={24} color="#1877f2" /> },
  { label: "WeChat", icon: <FaWeixin size={28} color="#7ed321" /> },
  { label: "Email", icon: <Envelope w={25} h={20} /> },
];

function Sidebar() {
  return (
    <aside className="text-[#444]">
      <div className="divide-y divide-white bg-[#f5f5f5] text-[15px] font-medium">
        <button className="flex h-[65px] w-full items-center bg-[#72a83a] pr-5 pl-[22px] text-white">
          <span className="w-[42px]"><PdfIcon /></span>PDF<span className="ml-auto"><Tray /></span>
        </button>
        {actions.map((a) => (
          <button key={a.label} className="flex h-[65px] w-full items-center pt-0.5 pr-5 pl-[22px]">
            <span className="w-[42px]">{a.icon}</span>{a.label}<span className="ml-auto">{a.end}</span>
          </button>
        ))}
        <div className="flex h-[151px] justify-between pt-[22px] pr-12 pl-6 text-[13px] font-normal">
          <dl>
            <dt className="leading-5">Views</dt>
            <dd className="text-[20px] leading-[26px] font-semibold">13295</dd>
            <dt className="leading-5">Downloads</dt>
            <dd className="text-[20px] leading-[26px] font-semibold">3969</dd>
          </dl>
          <div className="flex flex-col items-center">
            <span className="leading-5">Citations</span>
            <span className="relative mt-4 flex h-16 w-16 items-center justify-center rounded-full shadow-[0_1px_5px_rgba(0,0,0,0.35)]">
              <Badge />
              <span className="absolute text-[14px] text-[#222]">156</span>
            </span>
          </div>
        </div>
        <div className="grid h-[61px] grid-cols-5 divide-x divide-white">
          {shares.map((s) => (
            <button key={s.label} aria-label={s.label} className="flex items-center justify-center">{s.icon}</button>
          ))}
        </div>
      </div>
      <h2 className="mt-4 pl-4 text-[20px] leading-8 font-semibold text-black">Related articles</h2>
      <div className="mt-9 pl-[18px]">
        <a href="#related" className="block font-['Liberation_Serif',serif] text-[18px] leading-[23px] font-bold text-[#444]">
          Enhanced Human Action Recognition
          <br />
          Using Fusion of Skeletal Joint Dynamics
          <br />
          and Structural Features
        </a>
        <p className="mt-2 text-[13px] leading-[23px] font-medium text-[#888]">
          S. N. Muralikrishna | Balachandra Muniyal | ...
          <br />| Raghurama Holla
        </p>
      </div>
    </aside>
  );
}

const journalNav = ["Journal overview", "For authors", "For reviewers", "For editors", "Table of Contents", "Special Issues"];

function JournalPage() {
  return (
    <div className="min-w-0 flex-1 overflow-hidden bg-white font-['Inter','Noto_Sans_CJK_TC',sans-serif]">
      <header className="border-b border-[#ddd]">
        <div className="mx-auto flex h-[69px] max-w-[1440px] items-center pr-6 pl-5">
          <a href="#home" className="flex items-center gap-2 font-['Roboto',sans-serif] text-[24px] font-light text-[#444]">
            <HindawiRings />
            Hindawi
          </a>
          <nav className="ml-auto flex items-center gap-[34px] pt-0.5 text-[15px] font-medium text-[#444]">
            <a href="#journals" className="relative">
              Journals
              <span className="absolute -right-1 -bottom-1 -left-1 h-0.5 bg-[#62a62f]" />
            </a>
            <a href="#publish">Publish with us</a>
            <a href="#partners">Publishing partnerships</a>
            <a href="#about">About us</a>
            <a href="#blog">Blog</a>
          </nav>
          <button aria-label="Search" className="ml-[53px]"><Search size={26} color="#57a21c" /></button>
        </div>
      </header>
      <div className="mx-auto max-w-[1440px]">
        <div className="flex h-[59px] items-center bg-[#3494a2] px-5 text-[26px] font-medium text-white">Computational Intelligence and Neuroscience</div>
        <nav className="mt-px grid h-[49px] grid-cols-[240px_238px_239px_238px_238px_1fr] gap-px text-[15px] font-medium text-white">
          {journalNav.map((n, i) => (
            <a key={n} href="#nav" className={"flex items-center justify-between bg-[#007b8b] pt-0.5 pr-4 " + (i % 5 === 0 ? "pl-5" : "pl-4")}>
              {n}
              {i % 5 === 0 && <ChevronDown size={18} />}
            </a>
          ))}
        </nav>
        <p className="mt-3.5 px-5 text-[13px] leading-5 text-[#444]">
          Computational Intelligence and Neuroscience &nbsp;/&nbsp; 2016 &nbsp;/&nbsp; <b className="font-semibold">Article</b>
        </p>
        <div className="mt-[25px] grid grid-cols-[350px_1fr_350px] items-start gap-16 px-5">
          <nav className="divide-y divide-[#ddd] border border-[#ddd] bg-[#f2f2f2] text-[15px] font-medium text-[#4a4a4a]">
            <h2 className="flex h-[47px] items-center bg-white pt-0.5 pl-5 font-semibold text-black">On this page</h2>
            {sections.map((s) => (
              <a key={s} href="#section" className="flex h-[42px] items-center pt-0.5 pl-5">{s}</a>
            ))}
          </nav>
          <Article />
          <Sidebar />
        </div>
      </div>
    </div>
  );
}

/* ---------- taskbar ---------- */

const apps: { icon: ReactNode; label: string; state?: "open" | "multi" | "active" }[] = [
  { icon: <WinLogo />, label: "Start" },
  { icon: <TaskView />, label: "Task view" },
  { icon: <Edge />, label: "Edge" },
  { icon: <Explorer />, label: "Explorer", state: "open" },
  { icon: <Snip />, label: "Snip", state: "open" },
  { icon: <Excel />, label: "Excel" },
  { icon: <Firefox s={24} />, label: "Firefox", state: "multi" },
  { icon: <GreyStar />, label: "Favourites" },
  { icon: <ZoteroBadge />, label: "Zotero", state: "active" },
  { icon: <Notepad />, label: "Notepad", state: "open" },
  { icon: <Sticky />, label: "Sticky notes", state: "multi" },
  { icon: <Npp />, label: "Editor", state: "open" },
];

const Clock = () => (
  <div className="text-center leading-[17px]">
    5:20 PM
    <br />
    30/3/2023
  </div>
);

function Taskbar({ tray }: { tray?: boolean }) {
  return (
    <footer className="flex h-10 shrink-0 items-center bg-[#1c1c1c] text-[11px] text-white">
      {apps.map((a) => (
        <button key={a.label} aria-label={a.label} className={"relative flex h-full w-[49px] items-center justify-center " + (a.state === "active" ? "bg-[#4b4b4b]" : "")}>
          {a.icon}
          {a.state === "active" && <span className="absolute inset-x-0 bottom-0 h-0.5 bg-[#76b9ed]" />}
          {a.state === "open" && <span className="absolute inset-x-1 bottom-0 h-0.5 bg-[#76b9ed]" />}
          {a.state === "multi" && <span className="absolute inset-x-1 bottom-0 h-0.5 border-r-8 border-[#4f7ea3] bg-[#76b9ed]" />}
        </button>
      ))}
      <div className="ml-auto flex h-full items-center">
        {tray ? (
          <>
            <svg width="24" height="22" viewBox="0 0 24 22" aria-hidden="true">
              <circle cx="10" cy="10" r="10" fill="#f79a22" />
              <path d="M9 20a4 4 0 0 1 1-7 5 5 0 0 1 9-1 4 4 0 0 1 1 8z" fill="#bcd4f5" />
            </svg>
            <span className="ml-2 text-[13px]">-1°C</span>
            <span className="mr-7 ml-2 text-[13px]">Mostly sunny</span>
            <ChevronUp size={15} />
            <span className="mx-3.5">ENG</span>
            <Clock />
            <svg width="26" height="28" viewBox="0 0 26 28" className="mr-2.5 ml-4" aria-hidden="true">
              <path d="M1 3h16v13h-8l-3 3v-3H1z" fill="#fff" />
              <path d="M4 7h10M4 10h10M4 13h7" stroke="#1c1c1c" />
              <circle cx="17" cy="19" r="7.500" fill="#2b2b2b" stroke="#999" />
              <text x="17" y="23" fontSize="11" fill="#fff" textAnchor="middle">1</text>
            </svg>
            <span className="h-full w-1 border-l border-[#777]" />
          </>
        ) : (
          <div className="pr-1.5"><Clock /></div>
        )}
      </div>
    </footer>
  );
}

/* ---------- Zotero ---------- */

const tree: { depth: number; label: string; icon: ReactNode; open?: boolean; sel?: boolean }[] = [
  { depth: 0, label: "My Library", icon: <Crate />, open: true },
  { depth: 1, label: "egbib", icon: <Folder />, sel: true },
  { depth: 1, label: "FHR", icon: <Folder />, open: true },
  ...["border_line", "dataset", "DL", "exclude after screening", "Exclude_after_eligibility", "exclude: not related to algo...", "exclude: not related to patt...", "Review", "system", "traditional"].map((label) => ({ depth: 2, label, icon: <Folder /> })),
  { depth: 1, label: "Merak", icon: <Folder /> },
  { depth: 1, label: "My Publications", icon: <Page /> },
  { depth: 1, label: "Duplicate Items", icon: <Dup /> },
  { depth: 1, label: "Unfiled Items", icon: <Unfiled /> },
  { depth: 1, label: "Retracted Items", icon: <RedX /> },
  { depth: 1, label: "Trash", icon: <Trash /> },
  { depth: 1, label: "", icon: null },
  { depth: 0, label: "Group Libraries", icon: <Group /> },
];

type Kind = "doc" | "people" | "book";
const items: [string, string, Kind][] = [
  ["A human activity recognition system using skeleton data from RGBD sensors", "Cippitelli et al.", "doc"],
  ["", "Newman", "doc"],
  ["", "Ke et al.", "doc"],
  ["", "Li et al.", "doc"],
  ["", "Li et al.", "doc"],
  ["", "Song et al.", "doc"],
  ["", "Zhong et al.", "doc"],
  ["", "Hosny et al.", "doc"],
  ["", "Paszke et al.", "doc"],
  ["rared window", "Jiang et al.", "doc"],
  ["gregation", "Li et al.", "doc"],
  ["", "Bavelas", "doc"],
  ["", "Girvan and Newman", "doc"],
  ["", "Duvenaud et al.", "doc"],
  ["", "Defferrard et al.", "doc"],
  ["", "Henaff et al.", "doc"],
  ["", "Tang et al.", "doc"],
  ["Demystifying neural style transfer", "Li et al.", "doc"],
  ["Diffusion-convolutional neural networks", "Atwood and Towsley", "people"],
  ["Distributed algorithms for computation of centrality measures in complex networks", "You et al.", "doc"],
  ["Enhanced skeleton visualization for view invariant human action recognition", "Liu et al.", "doc"],
  ["Hierarchical recurrent neural network for skeleton based action recognition", "Du et al.", "people"],
  ["Image-to-image translation with conditional adversarial networks", "Isola et al.", "people"],
  ["Imagenet classification with deep convolutional neural networks", "Krizhevsky et al.", "people"],
  ["Independently recurrent neural network (indrnn): Building a longer and deeper rnn", "Li et al.", "people"],
  ["Interpretable 3d human action analysis with temporal convolutional networks", "Kim and Reiter", "people"],
  ["Learning a deep model for human action recognition from novel viewpoints", "Rahmani et al.", "doc"],
  ["Learning and refining of privileged information-based RNNs for action recognition from depth sequences", "Shi and Kim", "people"],
  ["Learning Class Regularized Features for Action Recognition", "Stergiou et al.", "doc"],
  ["Memory attention networks for skeleton-based action recognition", "Xie et al.", "doc"],
  ["Modeling video evolution for action recognition", "Fernando et al.", "people"],
  ["Motif-based convolutional neural network on graphs", "Sankar et al.", "doc"],
  ["Natural history and tumor volume kinetics of papillary thyroid cancers during active surveillance", "Tuttle et al.", "doc"],
  ["Networks", "Newman", "book"],
  ["NTU RGB+D 120: A Large-Scale Benchmark for 3D Human Activity Understanding", "Liu et al.", "doc"],
  ["NTU RGB+D: A Large Scale Dataset for 3D Human Activity Analysis", "Shahroudy et al.", "people"],
  ["On the robustness of the cvpr 2018 white-box adversarial example defenses", "Athalye and Carlini", "doc"],
  ["Person re-identification by deep joint learning of multi-loss classification", "Li et al.", "doc"],
  ["Pose flow: Efficient online pose tracking", "Xiu et al.", "doc"],
  ["Posetrack: A benchmark for human pose estimation and tracking", "Andriluka et al.", "people"],
  ["Quo vadis, action recognition? a new model and the kinetics dataset", "Carreira and Zisserman", "people"],
  ["Ranking of closeness centrality for large-scale social networks", "Okamoto et al.", "people"],
  ["Real-time human pose recognition in parts from single depth images", "Shotton et al.", "people"],
  ["Real-world anomaly detection in surveillance videos", "Sultani et al.", "people"],
  ["Realtime multi-person 2d pose estimation using part affinity fields", "Cao et al.", "people"],
  ["Review of constraints on vision-based gesture recognition for human–computer interaction", "Chakraborty et al.", "doc"],
  ["Semantics-Guided Neural Networks for Efficient Skeleton-Based Human Action Recognition", "Zhang et al.", "doc"],
  ["", "", "doc"],
];

const kindIcon: Record<Kind, ReactNode> = { doc: <Page />, people: <People />, book: <BlueBook /> };

const ScrollUp = () => (
  <span className="flex h-[17px] items-center justify-center"><ChevronUp size={12} strokeWidth={3} color="#505050" /></span>
);
const ScrollDown = () => (
  <span className="mt-auto flex h-[17px] items-center justify-center"><ChevronDown size={12} strokeWidth={3} color="#505050" /></span>
);

const summary = [
  "This document is about the development of an activity recognition algorithm using RGBD sensors",
  "to monitor elderly people in home environments. The proposed algorithm extracts key poses",
  "from skeleton data and uses a clustering algorithm to compute and associate them without the",
  "need for a learning algorithm. The system employs a multiclass Support Vector Machine for",
  "classification and is evaluated on five publicly available datasets for activity recognition, showing",
  "promising results, particularly for recognizing actions related to Active and Assisted Living (AAL).",
  "The document also discusses the current applicability of this solution in AAL scenarios and future",
  "improvements needed.",
];

const chips: [string, string][] = [
  ["Abs2BG", "bg-[#fae4df] text-[#dc5433]"],
  ["Summarize", "bg-[#fae4df] text-[#dc5433]"],
  ["WhatsAbout", "bg-[#f7efe6] text-[#c99c5c]"],
  ["EvaluateJournal", "bg-[#fae4df] text-[#dc5433]"],
  ["AddTags", "bg-[#e9e3f7] text-[#7348c9]"],
  ["Eng2Fr", "bg-[#e4f6f4] text-[#56bdb2]"],
];

function Popup() {
  return (
    <div role="dialog" aria-label="Summary" className="absolute top-[44px] left-0 w-[614px] rounded-[10px] bg-white pt-[38px] pb-2.5 text-[13px] shadow-[0_16px_80px_rgba(0,0,0,0.42)]">
      <div className="bg-[#f1faf9] pl-[9px] leading-[29px] whitespace-nowrap text-[#3b4a5a]">
        {summary.map((s) => <p key={s}>{s}</p>)}
      </div>
      <div className="mt-2 flex gap-[9px] pl-[9px]">
        {chips.map(([c, k]) => (
          <button key={c} className={"h-[22px] rounded-full px-3 leading-[22px] " + k}>{c}</button>
        ))}
      </div>
      <div className="mt-3.5 flex justify-center gap-2">
        {[0, 1, 2].map((d) => <span key={d} className="h-[7px] w-[7px] rounded-full bg-[#ffb3b3]" />)}
      </div>
    </div>
  );
}

function ItemList() {
  return (
    <section className="relative z-10 flex min-w-0 flex-1">
      <div className="min-w-0 flex-1 overflow-hidden bg-white">
        <table className="w-full table-fixed">
          <colgroup>
            <col /><col className="w-[39px]" /><col className="w-[24px]" /><col className="w-[162px]" />
          </colgroup>
          <thead>
            <tr className="h-[22px] border-b border-[#c8c8c8] text-left">
              <th className="pl-[9px] font-normal">
                <span className="flex items-center justify-between pr-3.5">Title<Caret cls="rotate-180 text-[#808080]" /></span>
              </th>
              <th className="border-l border-[#d8d8d8] pl-2.5 font-normal">Da...</th>
              <th className="border-l border-[#d8d8d8] pl-1.5"><Paperclip size={12} color="#888" aria-label="Attachments" /></th>
              <th className="border-x border-[#d8d8d8] pl-2.5 font-normal">Creator</th>
            </tr>
          </thead>
          <tbody>
            {items.map(([t, c, k], i) => (
              <tr key={i} className={"h-5 leading-5 whitespace-nowrap " + (i === 0 ? "bg-[#f0f0f0]" : "")}>
                <td className={i === 9 || i === 10 ? "pl-[612px]" : "pl-6"}>
                  <span className="flex items-center gap-1.5">
                    {i !== 9 && i !== 10 && <span className="flex h-5 w-3.5 items-center">{kindIcon[k]}</span>}{t}
                  </span>
                </td>
                <td className="pl-1.5">{c && "3/1..."}</td>
                <td />
                <td className="pl-[5px]">{c}</td>
              </tr>
            ))}
          </tbody>
        </table>
      </div>
      <div className="flex w-4 flex-col border-r border-[#c8c8c8] bg-white pt-[23px]">
        <div className="flex min-h-0 flex-1 flex-col bg-[#f0f0f0]">
          <ScrollUp />
          <div className="h-[73%] bg-[#cdcdcd]" />
          <ScrollDown />
        </div>
      </div>
      <Popup />
    </section>
  );
}

const RoundButton = ({ sign, dim }: { sign: "minus" | "plus"; dim?: boolean }) => (
  <button aria-label={sign === "minus" ? "Remove author" : "Add author"} className={dim ? "opacity-40" : ""}>
    <svg width="14" height="14" viewBox="0 0 14 14" aria-hidden="true">
      <circle cx="7" cy="7" r="6.500" fill="#eee" stroke="#8a8a8a" />
      <path d={sign === "minus" ? "M3.500 7h7" : "M3.500 7h7M7 3.500v7"} stroke="#555" strokeWidth="1.700" />
    </svg>
  </button>
);

const fields: [string, string][] = [
  ["Item Type", "Journal Article"],
  ["Title", "A human activity recognition system using\nskeleton data from RGBD sensors"],
  ["Author", "Cippitelli, Enea"],
  ["Author", "Gasparrini, Samuele"],
  ["Author", "Gambi, Ennio"],
  ["Author", "Spinsante, Susanna"],
  ["(...) Abstract", "The aim of Active and Assisted Living is to ..."],
  ["Publication", "Computational intelligence and\nneuroscience"],
  ["Volume", "2016"], ["Issue", ""], ["Pages", ""], ["Date", "2016"], ["Series", ""], ["Series Title", ""],
  ["Series Text", ""], ["Journal Abbr", ""], ["Language", ""], ["DOI", ""], ["ISSN", ""], ["Short Title", ""],
  ["URL", ""], ["Accessed", ""], ["Archive", ""], ["Loc. in Archive", ""], ["Library Catalog", ""],
  ["Call Number", ""], ["Rights", ""], ["Extra", ""],
  ["Date Added", "3/11/2020, 5:49:25 PM"], ["Modified", "3/30/2023, 5:20:38 PM"],
];

function InfoPane() {
  return (
    <section className="w-[338px] shrink-0 bg-white pt-0.5">
      <div role="tablist" className="flex h-[26px]">
        <button role="tab" aria-selected="true" className="border-t border-r border-[#d8d8d8] px-2">Info</button>
        {["Notes", "Tags", "Related"].map((t) => (
          <button key={t} role="tab" className="border-t border-r border-[#d8d8d8] bg-[#f0f0f0] px-2">{t}</button>
        ))}
      </div>
      <table className="mt-3.5 w-full">
        <tbody>
          {fields.map(([k, v], i) => (
            <tr key={i} className="leading-[17px]">
              <th className="w-[88px] py-0.5 text-right align-top font-normal whitespace-nowrap">
                {k === "Author" ? (
                  <span className="flex items-center justify-end gap-[13px]"><Caret cls="text-black" />{k}</span>
                ) : k}
              </th>
              <td className="py-0.5 pl-[9px] whitespace-pre">
                {k === "Author" ? (
                  <span className="flex items-center gap-[9px] pr-[7px]">
                    <span className="mr-auto">{v}</span>
                    <span className="h-2 w-[22px] border border-[#ccc]" />
                    <RoundButton sign="minus" />
                    <RoundButton sign="plus" dim={i < 5} />
                  </span>
                ) : k === "Date" ? (
                  <span className="flex justify-between pr-2.5">{v}<span className="text-[#888]">y</span></span>
                ) : v}
              </td>
            </tr>
          ))}
        </tbody>
      </table>
    </section>
  );
}

function Collections() {
  return (
    <section className="flex w-[250px] shrink-0 flex-col border-r border-[#c8c8c8] bg-white">
      <div className="flex h-[411px] shrink-0 overflow-hidden border-b border-[#c8c8c8]">
        <ul className="min-w-0 flex-1">
          {tree.map((n, i) => (
            <li key={i} className={"flex h-5 items-center whitespace-nowrap " + (n.sel ? "bg-[#efefef]" : "")}>
              <span className={"flex shrink-0 justify-end pr-0.5 " + (n.depth === 0 ? "w-5" : n.depth === 1 ? "w-[35px]" : "w-[50px]")}>
                {n.open && <ChevronDown size={13} color="#555" strokeWidth={2.200} />}
              </span>
              <span className="mr-1.5 flex w-[17px] shrink-0 justify-center">{n.icon}</span>
              {n.label}
            </li>
          ))}
        </ul>
        <div className="flex w-[15px] flex-col bg-[#f0f0f0]">
          <ScrollUp />
          <div className="h-[289px] bg-[#cdcdcd]" />
          <ScrollDown />
        </div>
      </div>
      <div className="flex min-h-0 flex-1 items-start justify-center pt-[257px]">No tags to display</div>
      <div className="flex h-[27px] shrink-0 items-center gap-1.5 bg-[#f0f0f0] pl-1.5">
        <input aria-label="Filter tags" className="h-6 w-[214px] border border-[#7a7a7a] bg-white px-1" />
        <button aria-label="Tag colours" className="flex items-center gap-0.5">
          <svg width="12" height="12" viewBox="0 0 12 12" aria-hidden="true">
            <path d="M0 0h3v3H0z" fill="#f26d6d" /><path d="M4.500 0h3v3h-3z" fill="#f7b36b" /><path d="M9 0h3v3H9z" fill="#f7dc6b" />
            <path d="M0 4.500h3v3H0z" fill="#a6d86b" /><path d="M4.500 4.500h3v3h-3z" fill="#5fc77a" /><path d="M9 4.500h3v3H9z" fill="#6bb8f0" />
            <path d="M0 9h3v3H0z" fill="#4f78c0" /><path d="M4.500 9h3v3h-3z" fill="#c99be0" /><path d="M9 9h3v3H9z" fill="#f08bc0" />
          </svg>
          <Caret />
        </button>
      </div>
    </section>
  );
}

function Zotero() {
  return (
    <div className="flex min-h-0 flex-1 flex-col bg-white text-[11px] text-black">
      <div className="flex h-[23px] shrink-0 items-center pl-1">
        <ZoteroZ />
        <span className="pl-[7px]">egbib - Zotero</span>
        <div className="ml-auto flex items-center gap-[34px] pr-[18px]">
          <button aria-label="Minimize"><Minus size={12} strokeWidth={2} /></button>
          <button aria-label="Restore"><Restore /></button>
          <button aria-label="Close"><X size={14} strokeWidth={1.700} /></button>
        </div>
      </div>
      <div className="flex h-5 shrink-0 items-center gap-3 bg-[#f0f0f0] pl-1.5">
        {["File", "Edit", "View", "Tools", "Help"].map((m) => (
          <button key={m}><u>{m[0]}</u>{m.slice(1)}</button>
        ))}
      </div>
      <div className="flex h-[29px] shrink-0 items-center border-b border-[#c8c8c8] bg-[#f0f0f0] pb-0.5">
        <div className="flex w-[267px] shrink-0 items-center pl-[11px]">
          <button aria-label="New collection" className="relative mr-3.5"><Folder /><PlusDot /></button>
          <button aria-label="New library" className="relative mr-1.5"><Crate /><PlusDot /></button>
          <Caret />
        </div>
        <button aria-label="New item" className="mr-1.5">
          <svg width="15" height="15" viewBox="0 0 15 15" aria-hidden="true">
            <circle cx="7.500" cy="7.500" r="7" fill="#5fb04c" stroke="#3b7f2d" />
            <circle cx="7.500" cy="7.500" r="5.500" fill="none" stroke="#c7e8be" />
            <path d="M7.500 4v7M4 7.500h7" stroke="#fff" strokeWidth="2" />
          </svg>
        </button>
        <Caret />
        <button aria-label="Add by identifier" className="relative mr-4 ml-3">
          <svg width="15" height="15" viewBox="0 0 15 15" aria-hidden="true">
            <path d="M1 14 11 4" stroke="#4a5a68" strokeWidth="2.500" />
            <path d="M9 3l2-3 1 3 3 1-3 2-1 1z" fill="#f2b22f" />
          </svg>
          <PlusDot />
        </button>
        <button aria-label="New note" className="relative mr-2">
          <svg width="14" height="14" viewBox="0 0 14 14" aria-hidden="true">
            <path d="M.5.500h13v13H.5z" fill="#fbd98b" stroke="#d79a35" /><path d="M3 4h8M3 6.500h8" stroke="#e3ab4f" />
          </svg>
          <PlusDot />
        </button>
        <Caret />
        <button aria-label="Attach" className="mr-1.5 ml-3"><Paperclip size={15} color="#777" strokeWidth={1.800} /></button>
        <Caret />
        <span className="mx-[7px] h-5 w-px bg-[#888]" />
        <button aria-label="Advanced search" className="ml-1">
          <svg width="14" height="14" viewBox="0 0 14 14" aria-hidden="true">
            <path d="m8.500 8.500 4.500 4.500" stroke="#c98a45" strokeWidth="2.500" /><circle cx="5.500" cy="5.500" r="4.700" fill="#cfe3fa" stroke="#8fb3dc" />
          </svg>
        </button>
        <label className="ml-auto flex h-6 w-[172px] items-center border border-[#7a7a7a] bg-white pl-1">
          <Search size={12} color="#888" strokeWidth={1.700} className="-scale-x-100" />
          <Caret cls="mr-1 ml-2.5 text-[#606060]" />
          <input aria-label="All Fields & Tags" placeholder="All Fields & Tags" className="min-w-0 flex-1 placeholder:text-[#757575]" />
        </label>
        <button aria-label="Locate" className="mr-2 ml-[15px]">
          <svg width="11" height="10" viewBox="0 0 11 10" aria-hidden="true"><path d="M.5 3h5V.5l5 4.500-5 4.500V7h-5z" fill="#7bc043" stroke="#3f7d1f" /></svg>
        </button>
        <Caret />
        <button aria-label="Sync" className="mr-2.5 ml-[268px]">
          <svg width="13" height="14" viewBox="0 0 13 14" fill="none" aria-hidden="true">
            <path d="M10.500 8.500a4.500 4.500 0 1 1-3-5" stroke="#4fa84a" strokeWidth="3" /><path d="M6.500 0 11.500 3 7 7z" fill="#4fa84a" />
          </svg>
        </button>
      </div>
      <div className="flex min-h-0 flex-1">
        <Collections />
        <ItemList />
        <InfoPane />
      </div>
    </div>
  );
}

export default function App() {
  return (
    <div className="grid h-screen grid-rows-2 overflow-hidden bg-white font-['Noto_Sans','Noto_Sans_CJK_TC',sans-serif]">
      <div className="flex min-h-0 flex-col">
        <BrowserTabs />
        <UrlRow />
        <div className="flex min-h-0 flex-1">
          <JournalPage />
          <div className="flex w-[17px] shrink-0 flex-col bg-[#f0f0f0]">
            <ScrollUp />
            <div className="h-[31px] bg-[#cdcdcd]" />
            <ScrollDown />
          </div>
        </div>
        <Taskbar />
      </div>
      <div className="flex min-h-0 flex-col">
        <Zotero />
        <Taskbar tray />
      </div>
    </div>
  );
}
